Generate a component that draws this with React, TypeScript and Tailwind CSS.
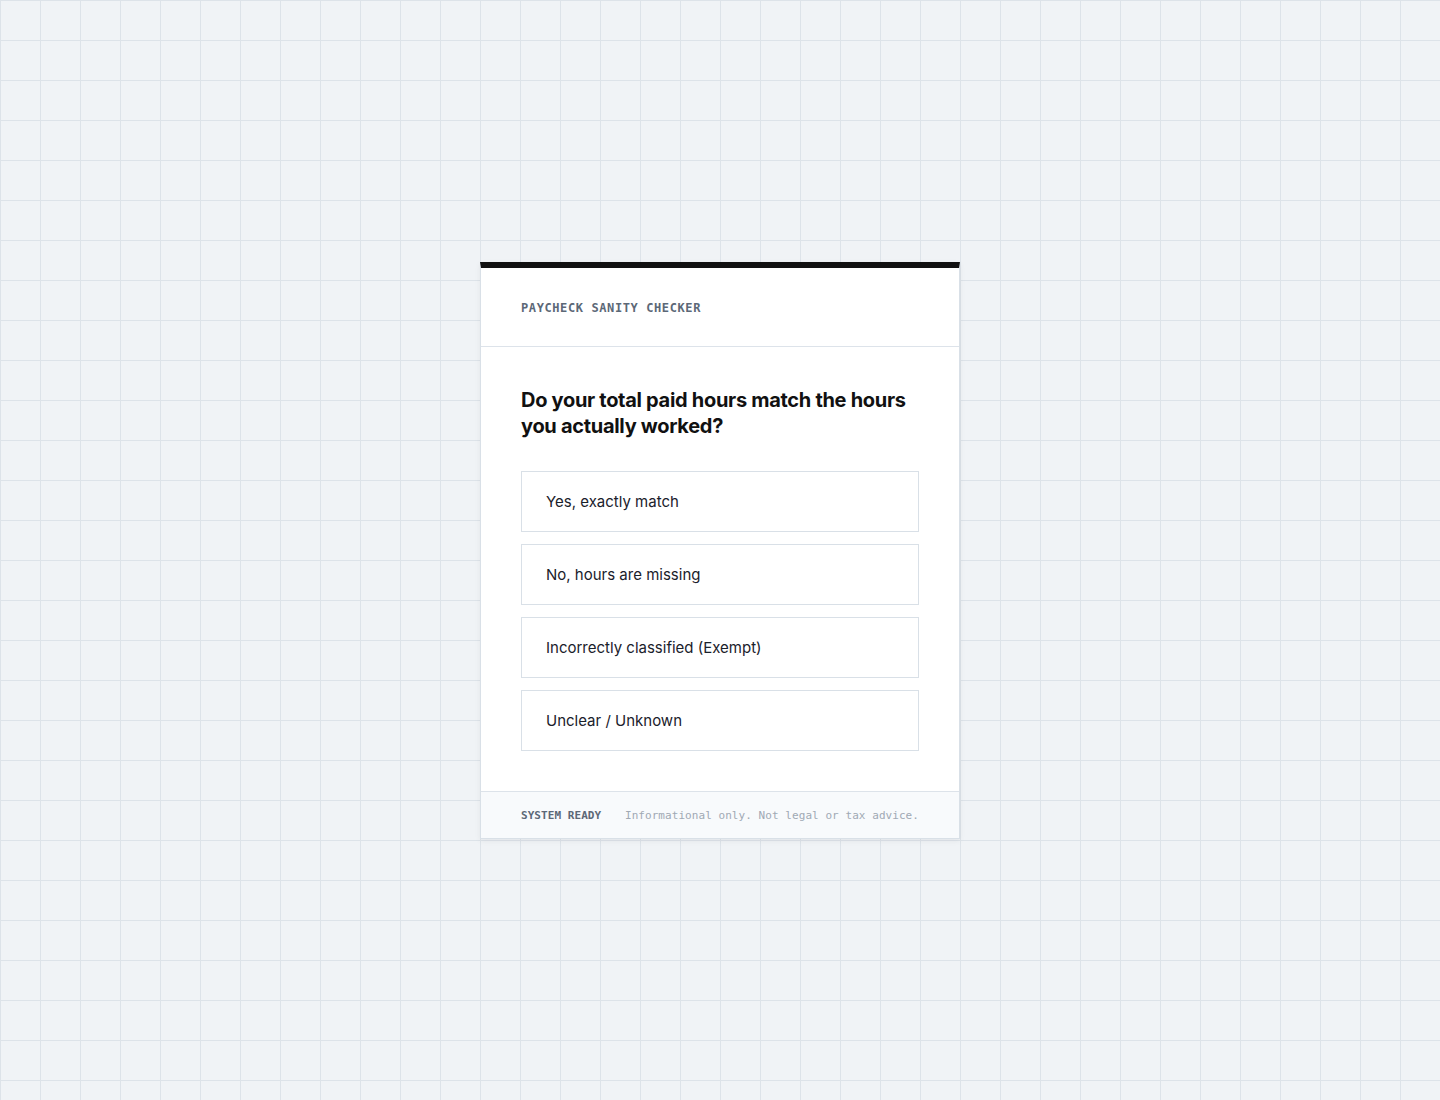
const options = [
  'Yes, exactly match',
  'No, hours are missing',
  'Incorrectly classified (Exempt)',
  'Unclear / Unknown',
]

const mono = "font-['DejaVu_Sans_Mono','Liberation_Mono',monospace]"

export default function App() {
  return (
    <div className="flex min-h-screen items-center justify-center bg-[#f0f3f6] bg-[linear-gradient(to_right,#dde3e9_1px,transparent_1px),linear-gradient(to_bottom,#dde3e9_1px,transparent_1px)] bg-[size:40px_40px] font-['Inter','Noto_Sans',sans-serif]">
      <div className="w-[480px] border border-t-[6px] border-[#d9e0e7] border-t-[#111111] bg-white shadow-[0_2px_6px_rgba(15,23,42,0.06)]">
        <header className="border-b border-[#dde3ea] px-10 pt-[32px] pb-[30px]">
          <p className={`${mono} text-[12px] font-bold leading-[16px] tracking-[0.05em] text-[#5c6877]`}>
            PAYCHECK SANITY CHECKER
          </p>
        </header>

        <main className="px-10 pt-10 pb-10">
          <h1 className="text-[20px] font-bold leading-[26px] tracking-[-0.015em] text-[#111111]">
            Do your total paid hours match the hours you actually worked?
          </h1>

          <div className="mt-8 flex flex-col gap-3">
            {options.map((label) => (
              <button
                key={label}
                type="button"
                className="flex h-[61px] items-center border border-[#d9e0e7] bg-white px-6 pt-[2px] text-left text-[15px] text-[#1a212b] hover:border-[#9aa4b0]"
              >
                {label}
              </button>
            ))}
          </div>
        </main>

        <footer className={`${mono} flex h-[47px] items-center justify-between border-t border-[#dde3ea] bg-[#f8fafc] px-10 pt-[3px] text-[11px] tracking-[0.06px]`}>
          <span className="font-bold text-[#5c6877]">SYSTEM READY</span>
          <span className="text-[#a0a9b4]">Informational only. Not legal or tax advice.</span>
        </footer>
      </div>
    </div>
  )
}
